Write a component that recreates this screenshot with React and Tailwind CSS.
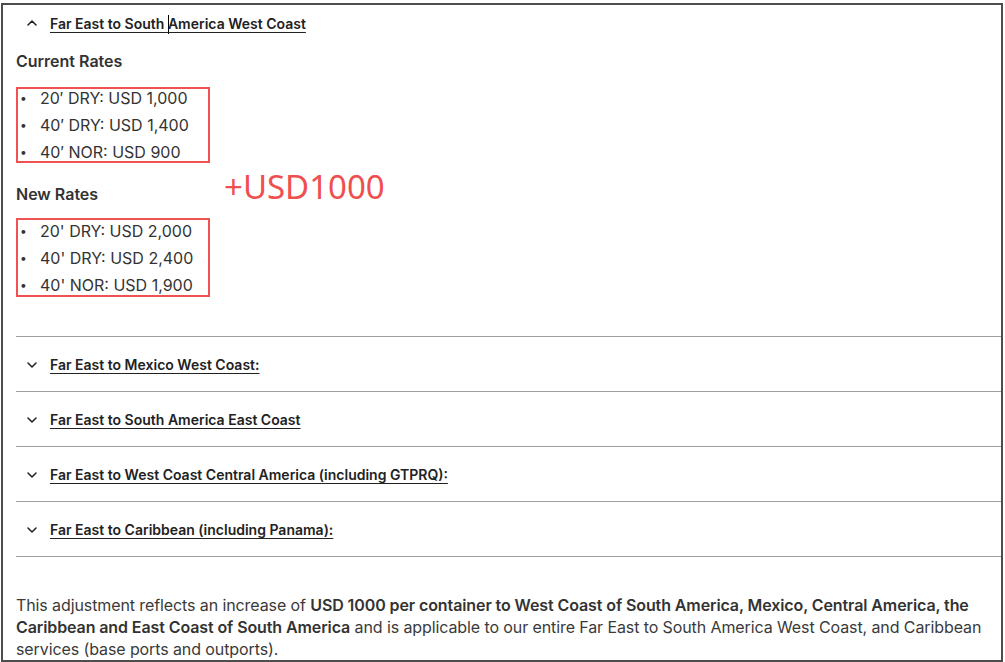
import { ChevronDown, ChevronUp } from 'lucide-react';

const font = { fontFamily: 'Inter, "Liberation Sans", sans-serif' };

const current = ['20′ DRY: USD 1,000', '40′ DRY: USD 1,400', '40′ NOR: USD 900'];
const next = ["20' DRY: USD 2,000", "40' DRY: USD 2,400", "40' NOR: USD 1,900"];

const routes = [
  'Far East to Mexico West Coast:',
  'Far East to South America East Coast',
  'Far East to West Coast Central America (including GTPRQ):',
  'Far East to Caribbean (including Panama):',
];

function RateBox({ items }) {
  return (
    <div className="w-[194px] border-2 border-[#f05252]">
      <ul className="flex flex-col gap-[9px]">
        {items.map(t => (
          <li key={t} className="flex items-center h-[18px] text-[16px] text-[#333]">
            <span className="w-[22px] pl-[2px] text-[12px] leading-none">•</span>
            <span>{t}</span>
          </li>
        ))}
      </ul>
    </div>
  );
}

export default function App() {
  return (
    <div className="w-[1005px] h-[662px] bg-white pt-[3px] pl-[1px]" style={font}>
      <div className="relative w-[1002px] h-[659px] border-2 border-[#4d4d4d] pl-[13px] overflow-hidden">
        {/* Open section */}
        <div className="h-[36px] flex items-center">
          <ChevronUp size={16} strokeWidth={2.3} className="ml-[8px] mr-[10px] text-[#222]" />
          <span className="text-[14px] font-semibold text-[#222] underline underline-offset-[3px]">
            Far East to South <span className="inline-block w-px h-[19px] bg-black -mr-px align-[-5px]" />America West Coast
          </span>
        </div>

        <div className="mt-[8px] h-[24px] leading-[24px] text-[16px] font-semibold text-[#333]">Current Rates</div>
        <div className="mt-[14px]">
          <RateBox items={current} />
        </div>

        <div className="mt-[19px] h-[24px] leading-[24px] text-[16px] font-semibold text-[#333]">New Rates</div>
        <div className="mt-[12px]">
          <div className="w-[194px] h-[79px] border-2 border-[#f05252] pt-[1px]">
            <ul className="flex flex-col gap-[7px]">
              {next.map(t => (
                <li key={t} className="flex items-center h-[20px] text-[16px] text-[#333]">
                  <span className="w-[22px] pl-[2px] text-[12px] leading-none">•</span>
                  <span>{t}</span>
                </li>
              ))}
            </ul>
          </div>
        </div>

        {/* annotation */}
        <div
          className="absolute left-[221px] top-[161px] text-[33px] leading-[42px] text-[#f04f4f]"
          style={{ fontFamily: '"Noto Sans", sans-serif' }}
        >
          +USD1000
        </div>

        {/* Collapsed sections */}
        <div className="mt-[39px] border-t border-[#a0a0a0]">
          {routes.map(r => (
            <div key={r} className="h-[55px] border-b border-[#a0a0a0] flex items-center pt-[1px]">
              <ChevronDown size={16} strokeWidth={2.3} className="ml-[8px] mr-[10px] text-[#222]" />
              <span className="text-[14px] font-semibold text-[#222] underline underline-offset-[3px]">{r}</span>
            </div>
          ))}
        </div>

        <p className="mt-[37px] pr-[2px] text-[16px] leading-[22px] tracking-[-0.1px] text-[#3a3a3a]">
          This adjustment reflects an increase of{' '}
          <b className="font-semibold text-[#333]">
            USD 1000 per container to West Coast of South America, Mexico, Central America, the Caribbean and East Coast of South America
          </b>{' '}
          and is applicable to our entire Far East to South America West Coast, and Caribbean services (base ports and outports).
        </p>
      </div>
    </div>
  );
}
